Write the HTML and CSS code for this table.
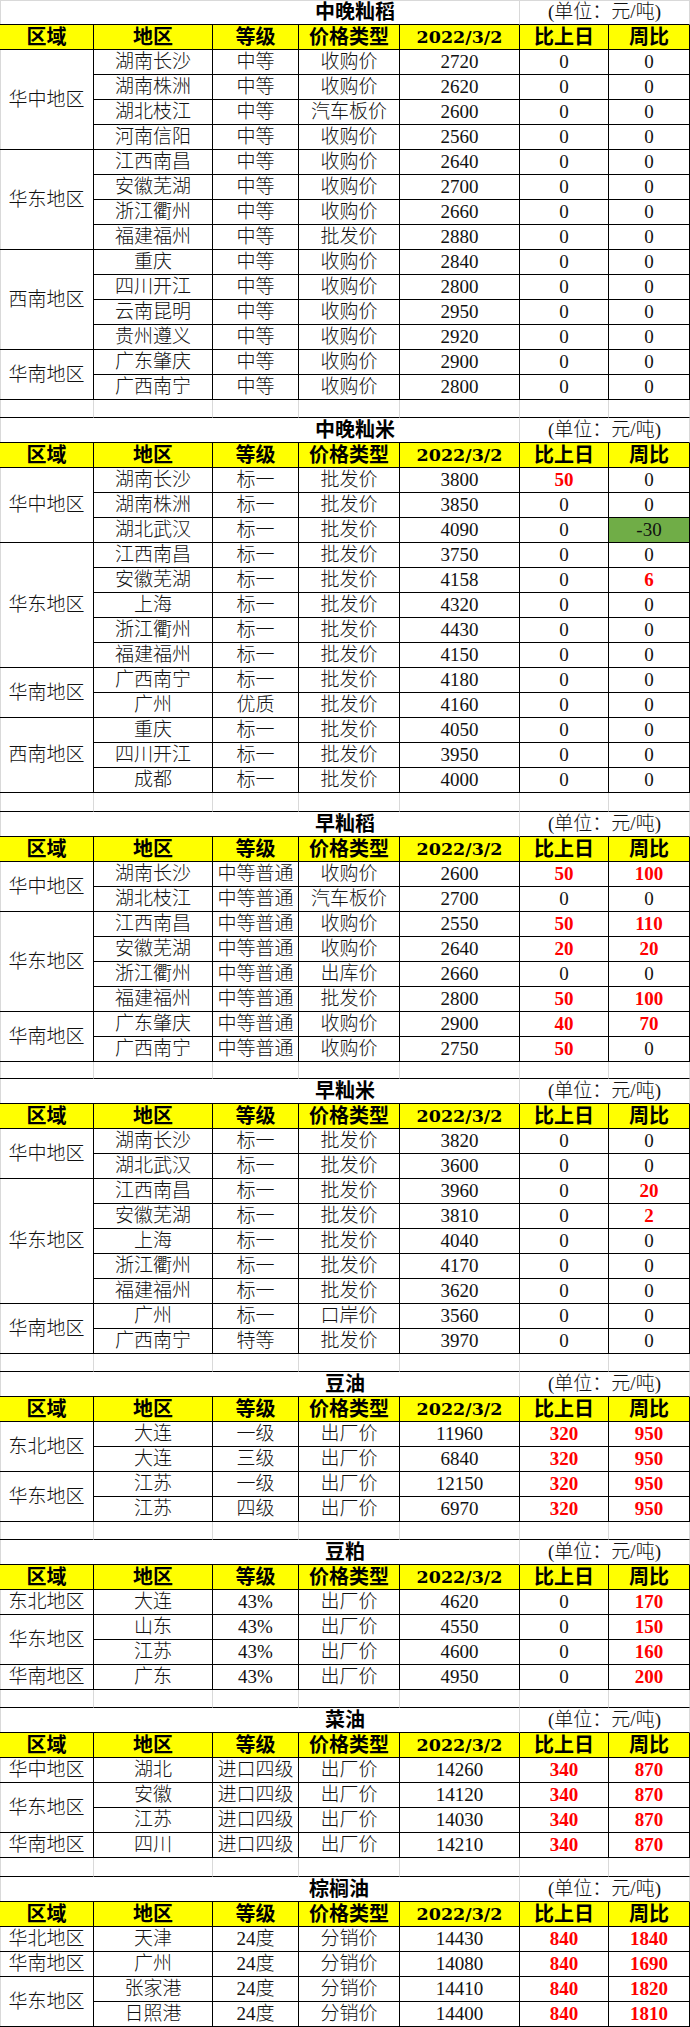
FILE: index.html
```html
<!DOCTYPE html>
<html lang="zh-CN">
<head>
<meta charset="utf-8">
<title>价格表</title>
<link rel="stylesheet" href="styles.css">
</head>
<body>
<div class="sheet">

<section class="tbl first">
  <div class="title t4">中晚籼稻</div><div class="unit">(单位：元/吨)</div>
  <div class="hd">区域</div><div class="hd">地区</div><div class="hd">等级</div><div class="hd">价格类型</div><div class="hd date">2022/3/2</div><div class="hd">比上日</div><div class="hd">周比</div>
  <div class="rg s4">华中地区</div>
  <div>湖南长沙</div><div>中等</div><div>收购价</div><div>2720</div><div>0</div><div>0</div>
  <div>湖南株洲</div><div>中等</div><div>收购价</div><div>2620</div><div>0</div><div>0</div>
  <div>湖北枝江</div><div>中等</div><div>汽车板价</div><div>2600</div><div>0</div><div>0</div>
  <div>河南信阳</div><div>中等</div><div>收购价</div><div>2560</div><div>0</div><div>0</div>
  <div class="rg s4">华东地区</div>
  <div>江西南昌</div><div>中等</div><div>收购价</div><div>2640</div><div>0</div><div>0</div>
  <div>安徽芜湖</div><div>中等</div><div>收购价</div><div>2700</div><div>0</div><div>0</div>
  <div>浙江衢州</div><div>中等</div><div>收购价</div><div>2660</div><div>0</div><div>0</div>
  <div>福建福州</div><div>中等</div><div>批发价</div><div>2880</div><div>0</div><div>0</div>
  <div class="rg s4">西南地区</div>
  <div>重庆</div><div>中等</div><div>收购价</div><div>2840</div><div>0</div><div>0</div>
  <div>四川开江</div><div>中等</div><div>收购价</div><div>2800</div><div>0</div><div>0</div>
  <div>云南昆明</div><div>中等</div><div>收购价</div><div>2950</div><div>0</div><div>0</div>
  <div>贵州遵义</div><div>中等</div><div>收购价</div><div>2920</div><div>0</div><div>0</div>
  <div class="rg s2">华南地区</div>
  <div>广东肇庆</div><div>中等</div><div>收购价</div><div>2900</div><div>0</div><div>0</div>
  <div>广西南宁</div><div>中等</div><div>收购价</div><div>2800</div><div>0</div><div>0</div>
</section>
<div class="spacer"><div></div><div></div><div></div><div></div><div></div><div></div><div></div></div>

<section class="tbl">
  <div class="title t4">中晚籼米</div><div class="unit">(单位：元/吨)</div>
  <div class="hd">区域</div><div class="hd">地区</div><div class="hd">等级</div><div class="hd">价格类型</div><div class="hd date">2022/3/2</div><div class="hd">比上日</div><div class="hd">周比</div>
  <div class="rg s3">华中地区</div>
  <div>湖南长沙</div><div>标一</div><div>批发价</div><div>3800</div><div class="up">50</div><div>0</div>
  <div>湖南株洲</div><div>标一</div><div>批发价</div><div>3850</div><div>0</div><div>0</div>
  <div>湖北武汉</div><div>标一</div><div>批发价</div><div>4090</div><div>0</div><div class="dn">-30</div>
  <div class="rg s5">华东地区</div>
  <div>江西南昌</div><div>标一</div><div>批发价</div><div>3750</div><div>0</div><div>0</div>
  <div>安徽芜湖</div><div>标一</div><div>批发价</div><div>4158</div><div>0</div><div class="up">6</div>
  <div>上海</div><div>标一</div><div>批发价</div><div>4320</div><div>0</div><div>0</div>
  <div>浙江衢州</div><div>标一</div><div>批发价</div><div>4430</div><div>0</div><div>0</div>
  <div>福建福州</div><div>标一</div><div>批发价</div><div>4150</div><div>0</div><div>0</div>
  <div class="rg s2">华南地区</div>
  <div>广西南宁</div><div>标一</div><div>批发价</div><div>4180</div><div>0</div><div>0</div>
  <div>广州</div><div>优质</div><div>批发价</div><div>4160</div><div>0</div><div>0</div>
  <div class="rg s3">西南地区</div>
  <div>重庆</div><div>标一</div><div>批发价</div><div>4050</div><div>0</div><div>0</div>
  <div>四川开江</div><div>标一</div><div>批发价</div><div>3950</div><div>0</div><div>0</div>
  <div>成都</div><div>标一</div><div>批发价</div><div>4000</div><div>0</div><div>0</div>
</section>
<div class="spacer tall"><div></div><div></div><div></div><div></div><div></div><div></div><div></div></div>

<section class="tbl">
  <div class="title t3">早籼稻</div><div class="unit">(单位：元/吨)</div>
  <div class="hd">区域</div><div class="hd">地区</div><div class="hd">等级</div><div class="hd">价格类型</div><div class="hd date">2022/3/2</div><div class="hd">比上日</div><div class="hd">周比</div>
  <div class="rg s2">华中地区</div>
  <div>湖南长沙</div><div>中等普通</div><div>收购价</div><div>2600</div><div class="up">50</div><div class="up">100</div>
  <div>湖北枝江</div><div>中等普通</div><div>汽车板价</div><div>2700</div><div>0</div><div>0</div>
  <div class="rg s4">华东地区</div>
  <div>江西南昌</div><div>中等普通</div><div>收购价</div><div>2550</div><div class="up">50</div><div class="up">110</div>
  <div>安徽芜湖</div><div>中等普通</div><div>收购价</div><div>2640</div><div class="up">20</div><div class="up">20</div>
  <div>浙江衢州</div><div>中等普通</div><div>出库价</div><div>2660</div><div>0</div><div>0</div>
  <div>福建福州</div><div>中等普通</div><div>批发价</div><div>2800</div><div class="up">50</div><div class="up">100</div>
  <div class="rg s2">华南地区</div>
  <div>广东肇庆</div><div>中等普通</div><div>收购价</div><div>2900</div><div class="up">40</div><div class="up">70</div>
  <div>广西南宁</div><div>中等普通</div><div>收购价</div><div>2750</div><div class="up">50</div><div>0</div>
</section>
<div class="spacer short"><div></div><div></div><div></div><div></div><div></div><div></div><div></div></div>

<section class="tbl">
  <div class="title t3">早籼米</div><div class="unit">(单位：元/吨)</div>
  <div class="hd">区域</div><div class="hd">地区</div><div class="hd">等级</div><div class="hd">价格类型</div><div class="hd date">2022/3/2</div><div class="hd">比上日</div><div class="hd">周比</div>
  <div class="rg s2">华中地区</div>
  <div>湖南长沙</div><div>标一</div><div>批发价</div><div>3820</div><div>0</div><div>0</div>
  <div>湖北武汉</div><div>标一</div><div>批发价</div><div>3600</div><div>0</div><div>0</div>
  <div class="rg s5">华东地区</div>
  <div>江西南昌</div><div>标一</div><div>批发价</div><div>3960</div><div>0</div><div class="up">20</div>
  <div>安徽芜湖</div><div>标一</div><div>批发价</div><div>3810</div><div>0</div><div class="up">2</div>
  <div>上海</div><div>标一</div><div>批发价</div><div>4040</div><div>0</div><div>0</div>
  <div>浙江衢州</div><div>标一</div><div>批发价</div><div>4170</div><div>0</div><div>0</div>
  <div>福建福州</div><div>标一</div><div>批发价</div><div>3620</div><div>0</div><div>0</div>
  <div class="rg s2">华南地区</div>
  <div>广州</div><div>标一</div><div>口岸价</div><div>3560</div><div>0</div><div>0</div>
  <div>广西南宁</div><div>特等</div><div>批发价</div><div>3970</div><div>0</div><div>0</div>
</section>
<div class="spacer"><div></div><div></div><div></div><div></div><div></div><div></div><div></div></div>

<section class="tbl">
  <div class="title t2">豆油</div><div class="unit">(单位：元/吨)</div>
  <div class="hd">区域</div><div class="hd">地区</div><div class="hd">等级</div><div class="hd">价格类型</div><div class="hd date">2022/3/2</div><div class="hd">比上日</div><div class="hd">周比</div>
  <div class="rg s2">东北地区</div>
  <div>大连</div><div>一级</div><div>出厂价</div><div>11960</div><div class="up">320</div><div class="up">950</div>
  <div>大连</div><div>三级</div><div>出厂价</div><div>6840</div><div class="up">320</div><div class="up">950</div>
  <div class="rg s2">华东地区</div>
  <div>江苏</div><div>一级</div><div>出厂价</div><div>12150</div><div class="up">320</div><div class="up">950</div>
  <div>江苏</div><div>四级</div><div>出厂价</div><div>6970</div><div class="up">320</div><div class="up">950</div>
</section>
<div class="spacer"><div></div><div></div><div></div><div></div><div></div><div></div><div></div></div>

<section class="tbl">
  <div class="title t2">豆粕</div><div class="unit">(单位：元/吨)</div>
  <div class="hd">区域</div><div class="hd">地区</div><div class="hd">等级</div><div class="hd">价格类型</div><div class="hd date">2022/3/2</div><div class="hd">比上日</div><div class="hd">周比</div>
  <div class="rg">东北地区</div>
  <div>大连</div><div>43%</div><div>出厂价</div><div>4620</div><div>0</div><div class="up">170</div>
  <div class="rg s2">华东地区</div>
  <div>山东</div><div>43%</div><div>出厂价</div><div>4550</div><div>0</div><div class="up">150</div>
  <div>江苏</div><div>43%</div><div>出厂价</div><div>4600</div><div>0</div><div class="up">160</div>
  <div class="rg">华南地区</div>
  <div>广东</div><div>43%</div><div>出厂价</div><div>4950</div><div>0</div><div class="up">200</div>
</section>
<div class="spacer"><div></div><div></div><div></div><div></div><div></div><div></div><div></div></div>

<section class="tbl">
  <div class="title t2">菜油</div><div class="unit">(单位：元/吨)</div>
  <div class="hd">区域</div><div class="hd">地区</div><div class="hd">等级</div><div class="hd">价格类型</div><div class="hd date">2022/3/2</div><div class="hd">比上日</div><div class="hd">周比</div>
  <div class="rg">华中地区</div>
  <div>湖北</div><div>进口四级</div><div>出厂价</div><div>14260</div><div class="up">340</div><div class="up">870</div>
  <div class="rg s2">华东地区</div>
  <div>安徽</div><div>进口四级</div><div>出厂价</div><div>14120</div><div class="up">340</div><div class="up">870</div>
  <div>江苏</div><div>进口四级</div><div>出厂价</div><div>14030</div><div class="up">340</div><div class="up">870</div>
  <div class="rg">华南地区</div>
  <div>四川</div><div>进口四级</div><div>出厂价</div><div>14210</div><div class="up">340</div><div class="up">870</div>
</section>
<div class="spacer tall"><div></div><div></div><div></div><div></div><div></div><div></div><div></div></div>

<section class="tbl">
  <div class="title t3b">棕榈油</div><div class="unit">(单位：元/吨)</div>
  <div class="hd">区域</div><div class="hd">地区</div><div class="hd">等级</div><div class="hd">价格类型</div><div class="hd date">2022/3/2</div><div class="hd">比上日</div><div class="hd">周比</div>
  <div class="rg">华北地区</div>
  <div>天津</div><div>24度</div><div>分销价</div><div>14430</div><div class="up">840</div><div class="up">1840</div>
  <div class="rg">华南地区</div>
  <div>广州</div><div>24度</div><div>分销价</div><div>14080</div><div class="up">840</div><div class="up">1690</div>
  <div class="rg s2">华东地区</div>
  <div>张家港</div><div>24度</div><div>分销价</div><div>14410</div><div class="up">840</div><div class="up">1820</div>
  <div>日照港</div><div>24度</div><div>分销价</div><div>14400</div><div class="up">840</div><div class="up">1810</div>
</section>

</div>
</body>
</html>
```

FILE: styles.css
```css
* {
  box-sizing: border-box;
  margin: 0;
  padding: 0;
}

html, body {
  background: #ffffff;
}

body {
  margin: 0;
  width: 690px;
  font-family: "Liberation Serif", "Noto Sans CJK SC", serif;
  color: #000000;
}

.sheet {
  width: 690px;
}

.tbl,
.spacer {
  display: grid;
  grid-template-columns: 94px 119px 86px 101px 120px 89px 81px;
}

.tbl {
  grid-auto-rows: 25px;
}

.tbl > div {
  display: flex;
  align-items: center;
  justify-content: center;
  border-right: 1px solid #000000;
  border-bottom: 1px solid #000000;
  font-size: 19px;
  line-height: 24px;
  font-weight: 300;
  white-space: nowrap;
  color: #111111;
}

/* first column: light sheet gridline on the left edge */
.tbl > .rg,
.tbl > .hd:first-child,
.tbl > .title {
  box-shadow: inset 1px 0 0 #d9d9d9;
}

.tbl > .hd:nth-child(3) {
  box-shadow: none;
}

.tbl > .rg {
  box-shadow: inset 1px 0 0 #d9d9d9;
}

.s2 { grid-row: span 2; }
.s3 { grid-row: span 3; }
.s4 { grid-row: span 4; }
.s5 { grid-row: span 5; }

/* title row */
.tbl > .title {
  grid-column: span 5;
  border-right: 1px solid #d9d9d9;
  font-size: 20px;
  font-weight: 700;
  color: #000000;
  justify-content: flex-start;
}

.tbl > .title.t4 { padding-left: 315px; }
.tbl > .title.t3 { padding-left: 315px; }
.tbl > .title.t2 { padding-left: 325px; }
.tbl > .title.t3b { padding-left: 309px; }

.tbl > .unit {
  grid-column: span 2;
  border-right: 1px solid #d9d9d9;
  font-size: 19px;
  font-weight: 300;
  color: #111111;
}

.first > .title,
.first > .unit {
  box-shadow: inset 0 1px 0 #d9d9d9;
}

.first > .title {
  box-shadow: inset 1px 1px 0 #d9d9d9;
}

/* header row */
.tbl > .hd {
  background: #ffff00;
  font-size: 20px;
  font-weight: 700;
  color: #000000;
}

.tbl > .hd.date {
  font-family: "DejaVu Serif", "Noto Sans CJK SC", serif;
  font-size: 17.5px;
}

/* changes */
.tbl > .up {
  color: #ff0000;
  font-weight: 700;
}

.tbl > .dn {
  background: #70ad47;
}

/* blank separating rows */
.spacer {
  height: 18px;
}

.spacer.tall {
  height: 19px;
}

.spacer.short {
  height: 17px;
}

.spacer > div {
  border-right: 1px solid #d9d9d9;
  border-bottom: 1px solid #000000;
}

.spacer > div:first-child {
  box-shadow: inset 1px 0 0 #d9d9d9;
}
```
